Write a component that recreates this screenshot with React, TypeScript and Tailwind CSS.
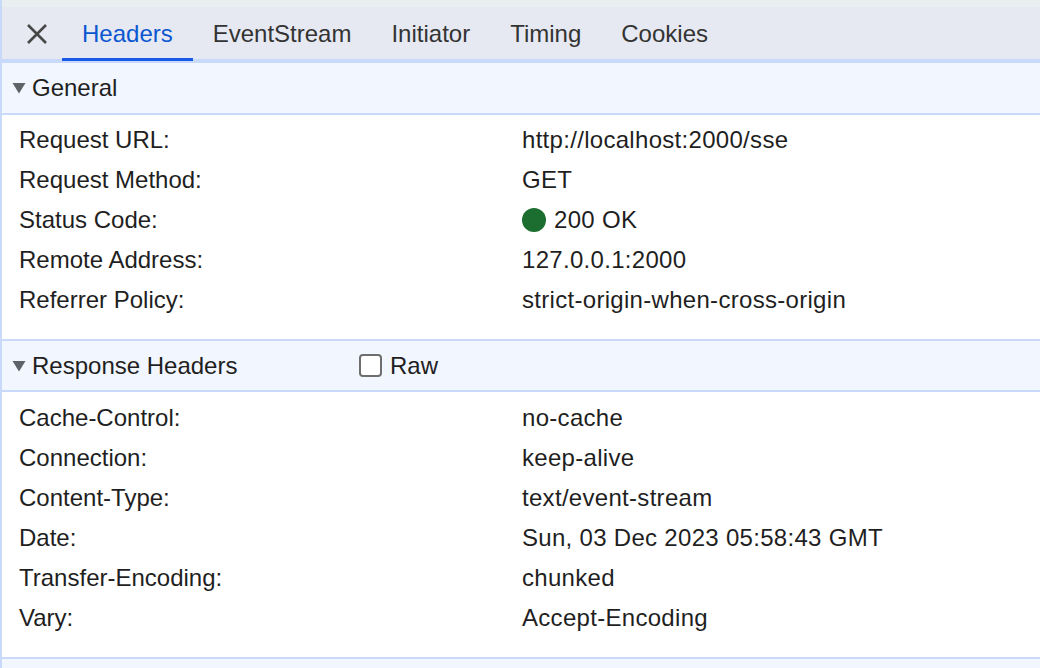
import React from "react";

const tabs = ["Headers", "EventStream", "Initiator", "Timing", "Cookies"];

const general: [string, React.ReactNode][] = [
  ["Request URL:", "http://localhost:2000/sse"],
  ["Request Method:", "GET"],
  [
    "Status Code:",
    <span className="flex items-center gap-[8px]">
      <span className="inline-block w-[24px] h-[24px] rounded-full bg-[#1b6e2f]" />
      200 OK
    </span>,
  ],
  ["Remote Address:", "127.0.0.1:2000"],
  ["Referrer Policy:", "strict-origin-when-cross-origin"],
];

const response: [string, string][] = [
  ["Cache-Control:", "no-cache"],
  ["Connection:", "keep-alive"],
  ["Content-Type:", "text/event-stream"],
  ["Date:", "Sun, 03 Dec 2023 05:58:43 GMT"],
  ["Transfer-Encoding:", "chunked"],
  ["Vary:", "Accept-Encoding"],
];

function Triangle() {
  return (
    <svg width="14" height="12" viewBox="0 0 14 12" className="shrink-0">
      <path d="M0.5 1 L13.5 1 L7 11.5 Z" fill="#5f6368" />
    </svg>
  );
}

function Row({ k, v }: { k: string; v: React.ReactNode }) {
  return (
    <div className="flex h-[40px] items-center">
      <div className="w-[520px] pl-[17px] shrink-0">{k}</div>
      <div className="tracking-[0.3px]">{v}</div>
    </div>
  );
}

export default function App() {
  return (
    <div
      className="w-[1040px] h-[668px] overflow-hidden bg-white border-l-2 border-[#c9d9f9] text-[24px] text-[#1f1f1f] flex flex-col"
      style={{ fontFamily: '"Liberation Sans", Arial, sans-serif' }}
    >
      <div className="h-[7px] bg-[#e9eef0] shrink-0" />
      <div className="h-[52px] bg-[#e6e9f2] flex items-stretch shrink-0 pt-[2px]">
        <div className="w-[60px] flex items-center justify-center pl-[10px]">
          <svg width="22" height="22" viewBox="0 0 22 22">
            <path d="M2 2 L20 20 M20 2 L2 20" stroke="#474747" strokeWidth="2.6" strokeLinecap="butt" />
          </svg>
        </div>
        {tabs.map((t, i) => (
          <div
            key={t}
            className={
              "relative px-[20px] flex items-center " +
              (i === 0 ? "text-[#0b57d0]" : "text-[#333333]")
            }
          >
            {t}
            {i === 0 && (
              <span className="absolute left-0 right-0 bottom-[-2px] h-[3px] bg-[#1a5ae8]" />
            )}
          </div>
        ))}
      </div>
      <div className="h-[4px] bg-[#c9d9f9] shrink-0" />

      <div className="h-[50px] bg-[#f2f6fe] flex items-center gap-[6px] pl-[10px] shrink-0">
        <Triangle />
        <span>General</span>
      </div>
      <div className="h-[2px] bg-[#c9d9f9] shrink-0" />
      <div className="pt-[5px] pb-[19px] shrink-0">
        {general.map(([k, v]) => (
          <Row key={k} k={k} v={v} />
        ))}
      </div>
      <div className="h-[2px] bg-[#c9d9f9] shrink-0" />

      <div className="h-[49px] bg-[#f2f6fe] flex items-center pl-[10px] shrink-0">
        <div className="flex items-center gap-[6px] w-[347px]">
          <Triangle />
          <span>Response Headers</span>
        </div>
        <div className="flex items-center gap-[8px]">
          <span className="inline-block w-[23px] h-[23px] rounded-[4px] border-2 border-[#6e6e6e] bg-white" />
          <span>Raw</span>
        </div>
      </div>
      <div className="h-[2px] bg-[#c9d9f9] shrink-0" />
      <div className="pt-[6px] pb-[19px] shrink-0">
        {response.map(([k, v]) => (
          <Row key={k} k={k} v={v} />
        ))}
      </div>
      <div className="h-[2px] bg-[#c9d9f9] shrink-0" />
      <div className="flex-1 bg-[#f2f6fe]" />
    </div>
  );
}
